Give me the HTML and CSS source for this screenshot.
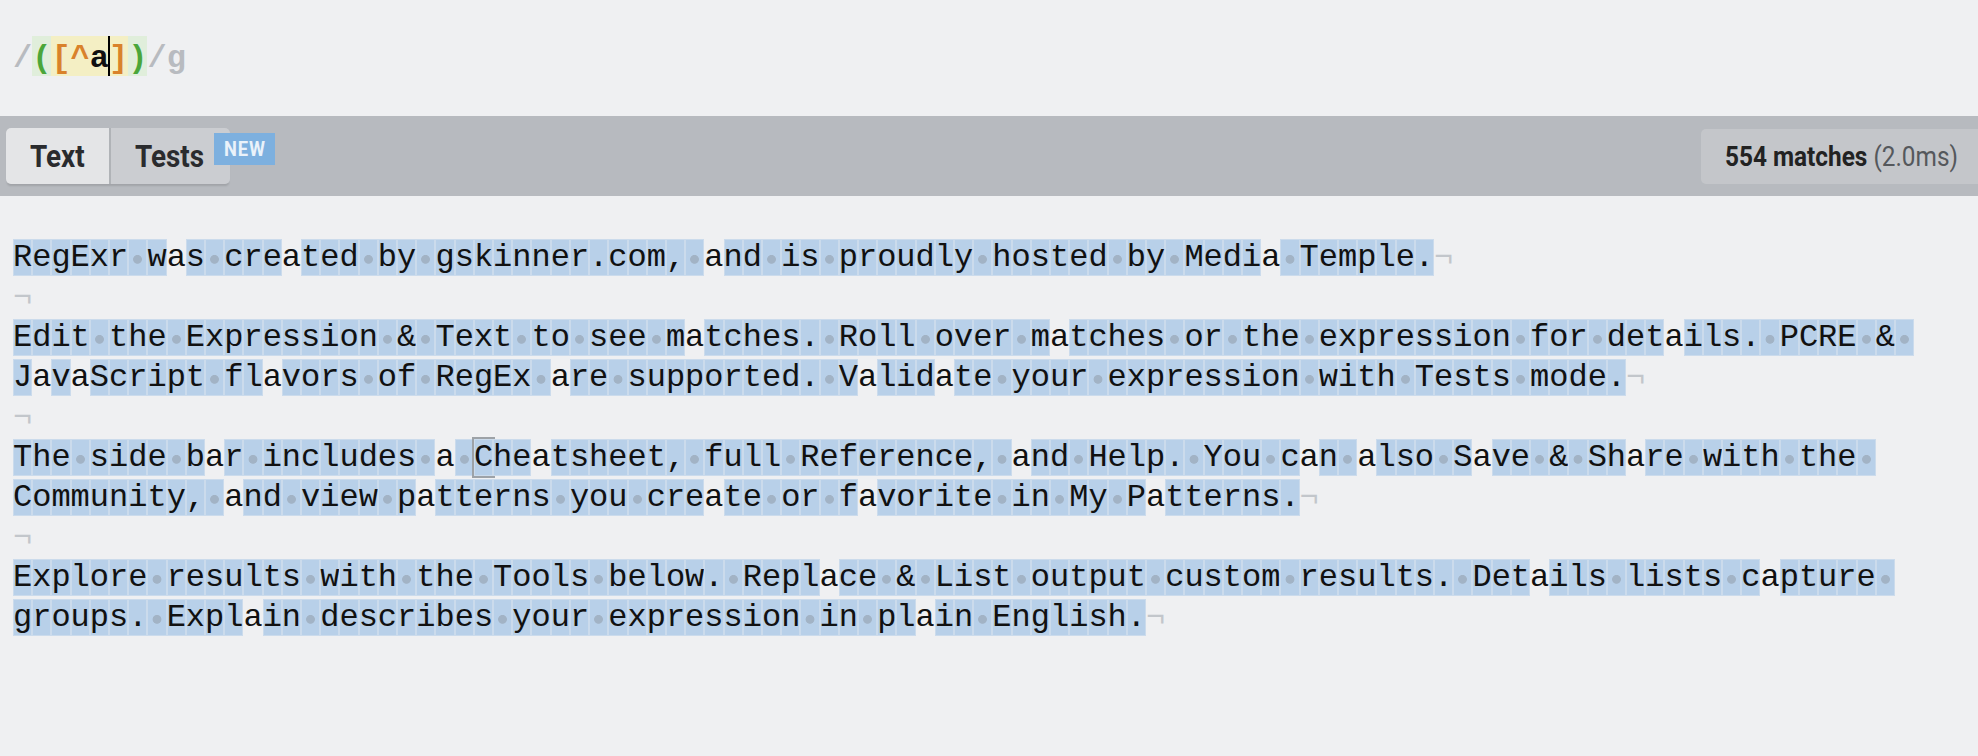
FILE: index.html
```html
<!DOCTYPE html>
<html>
<head>
<meta charset="utf-8">
<title>RegExr</title>
<link rel="stylesheet" href="styles.css">
</head>
<body>
<div class="expr"><span class="delim">/</span><span class="grp"><span class="paren">(</span><span class="set"><span class="br">[^</span><span class="lit">a</span><span class="cursor"></span><span class="br">]</span></span><span class="paren">)</span></span><span class="delim">/g</span></div>
<div class="toolbar">
  <div class="tabs">
    <div class="tab tab-on"><span class="cond">Text</span></div>
    <div class="tab tab-off"><span class="cond">Tests</span><span class="badge"><span class="cond">NEW</span></span></div>
  </div>
  <div class="matches"><span class="cond"><b>554 matches</b> <span class="time">(2.0ms)</span></span></div>
</div>
<div class="text" id="text"></div>
<script src="app.js"></script>
</body>
</html>
```
FILE: styles.css
```css
html, body {
  margin: 0;
  padding: 0;
  background: #eff0f2;
}
body {
  font-family: "Liberation Mono", "DejaVu Sans Mono", monospace;
  color: #111;
}
.expr {
  height: 116px;
  box-sizing: border-box;
  padding: 36px 0 0 13px;
  font-size: 32px;
  line-height: 46px;
  font-weight: bold;
  white-space: pre;
}
.delim { color: #b8bbc0; }
.grp {
  display: inline-block;
  background: #e0eedb;
  height: 40px;
  vertical-align: top;
}
.paren { color: #4aa63a; }
.set {
  display: inline-block;
  background: #f4efc4;
  height: 40px;
  vertical-align: top;
}
.br { color: #d9822b; }
.lit { color: #111; }
.cursor {
  display: inline-block;
  width: 0;
  height: 40px;
  border-left: 2px solid #000;
  margin-left: -1px;
  margin-right: -1px;
  vertical-align: top;
}
.toolbar {
  height: 80px;
  background: #b7babf;
  display: flex;
  align-items: center;
  justify-content: space-between;
  padding-left: 6px;
  font-family: Roboto, "Liberation Sans", sans-serif;
}
.cond {
  display: inline-block;
  transform: scaleX(0.87);
  transform-origin: left center;
  white-space: nowrap;
}
.tabs {
  display: flex;
  gap: 2px;
  background: #b0b3b7;
  border-radius: 5px;
  box-shadow: 0 3px 2px -1px rgba(0,0,0,0.12);
}
.tab {
  position: relative;
  height: 56px;
  box-sizing: border-box;
  display: flex;
  align-items: center;
  font-size: 32px;
  font-weight: bold;
  color: #2a2b2e;
}
.tab-on {
  width: 103px;
  padding-left: 24px;
  background: #e4e5e7;
  border-radius: 5px 0 0 5px;
}
.tab-off {
  width: 119px;
  padding-left: 24px;
  background: #cbcdd1;
  border-radius: 0 5px 5px 0;
}
.badge {
  position: absolute;
  left: 103px;
  top: 5px;
  width: 61px;
  height: 32px;
  box-sizing: border-box;
  padding-left: 10px;
  background: #7db0df;
  color: #eaf2fa;
  font-size: 21px;
  line-height: 32px;
  letter-spacing: 1px;
}
.matches {
  width: 277px;
  height: 55px;
  box-sizing: border-box;
  padding-left: 24px;
  background: #c4c6ca;
  border-radius: 5px 0 0 5px;
  display: flex;
  align-items: center;
  font-size: 28px;
  color: #222;
}
.matches b { font-weight: bold; }
.time { color: #55585c; font-weight: normal; }
.text {
  padding: 42px 13px 0 13px;
  font-size: 32px;
  line-height: 40px;
  white-space: pre-wrap;
  color: #111;
}
.line { min-height: 40px; }
.m {
  background: #b8d0e9;
  box-shadow: inset 0 0 0 1px #cbdbec;
}
.s {
  background: radial-gradient(circle at 50% 55%, #a2b3c5 0, #a2b3c5 4px, rgba(162,179,197,0) 4.8px), #b8d0e9;
}
.hov {
  box-shadow: 0 0 0 2px #9da2a7, inset 0 0 0 1px #cbdbec;
}
.eol { color: #c2c6cb; }
```
FILE: app.js
```js
(function () {
  var paras = [
    "RegExr was created by gskinner.com, and is proudly hosted by Media Temple.",
    "",
    "Edit the Expression & Text to see matches. Roll over matches or the expression for details. PCRE & JavaScript flavors of RegEx are supported. Validate your expression with Tests mode.",
    "",
    "The side bar includes a Cheatsheet, full Reference, and Help. You can also Save & Share with the Community, and view patterns you create or favorite in My Patterns.",
    "",
    "Explore results with the Tools below. Replace & List output custom results. Details lists capture groups. Explain describes your expression in plain English."
  ];
  var root = document.getElementById("text");
  paras.forEach(function (p, pi) {
    var line = document.createElement("div");
    line.className = "line";
    var plain = "";
    function flush() {
      if (plain) { line.appendChild(document.createTextNode(plain)); plain = ""; }
    }
    for (var i = 0; i < p.length; i++) {
      var c = p[i];
      if (c === "a") { plain += c; continue; }
      flush();
      var s = document.createElement("span");
      s.className = c === " " ? "m s" : "m";
      if (pi === 4 && c === "C" && p.substr(i, 10) === "Cheatsheet") s.className = "m hov";
      s.textContent = c;
      line.appendChild(s);
    }
    flush();
    var e = document.createElement("span");
    e.className = "eol";
    e.textContent = "\u00ac";
    line.appendChild(e);
    root.appendChild(line);
  });
})();
```
